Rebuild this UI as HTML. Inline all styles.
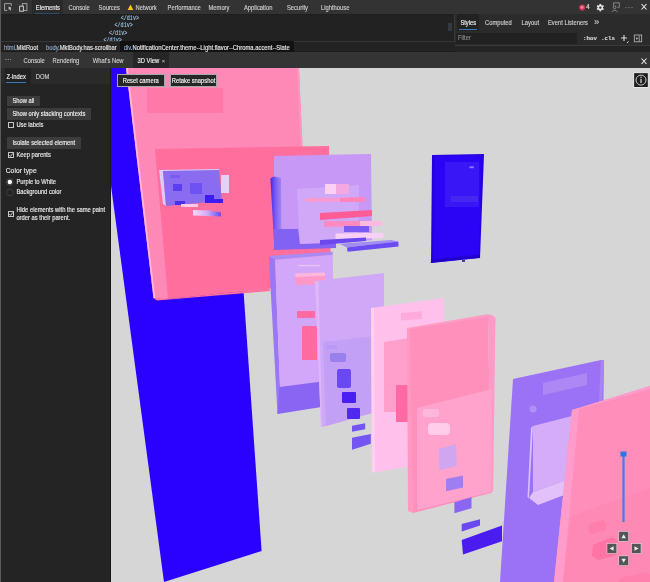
<!DOCTYPE html>
<html><head><meta charset="utf-8">
<style>
*{margin:0;padding:0;box-sizing:border-box}
html,body{width:650px;height:582px;overflow:hidden;background:#242424;font-family:"Liberation Sans",sans-serif;color:#ccc}
.a{position:absolute;white-space:nowrap}
#chromewrap div{-webkit-text-stroke:0.12px currentColor}
#top{position:absolute;left:0;top:0;width:650px;height:15.2px;background:#333;border-bottom:0.8px solid #1e1e1e}
#dom{position:absolute;left:0;top:15px;width:455px;height:26px;background:#222}
#crumb{position:absolute;left:0;top:40.6px;width:455px;height:11px;background:#232323;border-top:0.9px solid #363636;border-bottom:0.9px solid #1c1c1c}
#styles{position:absolute;left:455px;top:14px;width:195px;height:38px;background:#242424}
#drawer{position:absolute;left:0;top:51.6px;width:650px;height:16.4px;background:#343434}
#left{position:absolute;left:0;top:68px;width:110px;height:514px;background:#242424}
#canvas{position:absolute;left:111px;top:68px;width:539px;height:514px;background:#d6d6d6;overflow:hidden}
.t{font-size:5.8px;color:#cfcfcf;line-height:7px;transform:scaleY(1.15)}
.mono{font-family:"Liberation Mono",monospace}
.dm{font-size:5.1px;line-height:7px;color:#9cc0e0;transform:scaleY(1.25);transform-origin:0 0}
.cr{font-size:5.8px;line-height:7px;color:#e8e8e8;transform:scaleY(1.12)}
.tg{color:#8fa8c8}
.btn{position:absolute;background:#3c3c3c;color:#f0f0f0;font-size:5.8px;line-height:9.5px;padding-left:6px;white-space:nowrap}
.cb{position:absolute;width:6px;height:5.8px;border:0.8px solid #c8c8c8;border-radius:0.5px}
.btn span{display:inline-block;transform:scaleY(1.15)}
.cbtn span{display:inline-block;transform:scaleY(1.15);-webkit-text-stroke:0.12px currentColor}
.cbtn{will-change:transform;position:absolute;height:13.2px;background:#262626;border:0.7px solid #a8a8a8;color:#f6f6f6;font-size:5.8px;line-height:12.8px;text-align:center;white-space:nowrap}
</style></head><body>
<div id="chromewrap" style="position:absolute;left:0;top:0;width:650px;height:582px;will-change:transform">
<div id="top"></div>
<!-- top icons -->
<svg class="a" style="left:0;top:0" width="650" height="14" viewBox="0 0 650 14">
  <g fill="none" stroke="#a0a0a0" stroke-width="1">
    <path d="M11.3 5.8 V3.6 H4.6 V10.4 H7.2"/>
    <rect x="22.3" y="3.6" width="4.6" height="6.9"/>
  </g>
  <path d="M8.6 6.6 L11.8 8.1 L10.4 8.6 L11.2 10 L10.4 10.5 L9.6 9.1 L8.7 10 Z" fill="#c8c8c8"/>
  <rect x="19.6" y="6.2" width="3.8" height="5" fill="#333" stroke="#c8c8c8" stroke-width="1"/>
  <rect x="32" y="0" width="31" height="15" fill="#2a2a2a"/>
  <rect x="34.5" y="13.4" width="25" height="1" fill="#33689c"/>
  <path d="M127.6 10 L130.5 4.4 L133.4 10 Z" fill="#f5c518"/>
  <circle cx="582.2" cy="7.6" r="3.1" fill="#c8324e"/>
  <circle cx="582" cy="7.3" r="1.7" fill="#f07a92"/>
  <g transform="translate(600.3 7.6)"><circle r="2.7" fill="#e6e6e6"/>
    <g fill="#e6e6e6"><rect x="-0.9" y="-3.7" width="1.8" height="7.4"/><rect x="-0.9" y="-3.7" width="1.8" height="7.4" transform="rotate(60)"/><rect x="-0.9" y="-3.7" width="1.8" height="7.4" transform="rotate(-60)"/></g>
    <circle r="1.2" fill="#333"/></g>
  <g fill="none" stroke="#9a9a9a" stroke-width="0.8"><path d="M613.5 5.5 V2.8 H619.3 V7.3 H617.5"/><circle cx="614.6" cy="7.2" r="1.4"/><path d="M611.8 12 Q614.6 8.2 617.4 12"/></g>
  <g fill="#8a8a8a"><circle cx="626" cy="7.6" r="0.65"/><circle cx="629" cy="7.6" r="0.65"/><circle cx="632" cy="7.6" r="0.65"/></g>
  <path d="M641.5 4 L646.5 9.5 M646.5 4 L641.5 9.5" stroke="#eee" stroke-width="1.1"/>
</svg>
<div class="a t" style="left:35.8px;top:5.2px;color:#f0f0f0">Elements</div>
<div class="a t" style="left:68.5px;top:5.2px">Console</div>
<div class="a t" style="left:98.6px;top:5.2px">Sources</div>
<div class="a t" style="left:135.5px;top:5.2px">Network</div>
<div class="a t" style="left:167.6px;top:5.2px">Performance</div>
<div class="a t" style="left:208.5px;top:5.2px">Memory</div>
<div class="a t" style="left:244px;top:5.2px">Application</div>
<div class="a t" style="left:287px;top:5.2px">Security</div>
<div class="a t" style="left:321px;top:5.2px">Lighthouse</div>
<div class="a t" style="left:586.3px;top:4px;color:#eee">4</div>

<div id="dom"></div>
<div class="a mono dm" style="left:120.7px;top:15.3px">&lt;/div&gt;</div>
<div class="a mono dm" style="left:114.5px;top:22.2px">&lt;/div&gt;</div>
<div class="a mono dm" style="left:109px;top:29.9px">&lt;/div&gt;</div>
<div class="a mono dm" style="left:103.5px;top:37.2px">&lt;/div&gt;</div>
<div class="a" style="left:448px;top:23px;width:3.5px;height:8px;background:#343a42"></div>
<div class="a" style="left:454px;top:14px;width:1px;height:38px;background:#3a3a3a"></div>

<div id="crumb"></div>
<div class="a" style="left:120px;top:41px;width:174px;height:11px;background:#121212"></div>
<div class="a cr" style="left:4px;top:44.6px"><span class="tg">html</span>.MktRoot</div>
<div class="a cr" style="left:46px;top:44.6px"><span class="tg">body</span>.MktBody.has-scrollbar</div>
<div class="a cr" style="left:123.8px;top:44.6px;font-size:5.85px"><span class="tg">div</span>.NotificationCenter.theme--Light.flavor--Chroma.accent--Slate</div>

<div id="styles"></div>
<div class="a" style="left:455px;top:14px;width:195px;height:31px;background:#2b2b2b"></div>
<div class="a" style="left:457px;top:14px;width:22px;height:17px;background:#222"></div>
<div class="a" style="left:459px;top:29px;width:18px;height:1.2px;background:#3b78b8"></div>
<div class="a t" style="left:460.4px;top:19.8px;color:#f0f0f0">Styles</div>
<div class="a t" style="left:485px;top:19.8px">Computed</div>
<div class="a t" style="left:521.6px;top:19.8px">Layout</div>
<div class="a t" style="left:548px;top:19.8px">Event Listeners</div>
<div class="a" style="left:594px;top:17px;font-size:9.5px;line-height:9px;color:#ccc">»</div>
<div class="a" style="left:456px;top:33px;width:121px;height:11.4px;background:#212121"></div>
<div class="a t" style="left:458px;top:34.8px;color:#888">Filter</div>
<div class="a mono" style="left:583px;top:35px;font-size:5.8px;color:#ddd;font-weight:bold">:hov</div>
<div class="a mono" style="left:601px;top:35px;font-size:5.8px;color:#ddd;font-weight:bold">.cls</div>
<svg class="a" style="left:618px;top:32px" width="32" height="14">
  <path d="M3 6 H9 M6 3 V9" stroke="#ddd" stroke-width="1.1"/><path d="M9 11 L10.5 9.5" stroke="#ddd" stroke-width="1"/>
  <rect x="16.3" y="3" width="7.4" height="6.8" fill="none" stroke="#bbb" stroke-width="0.8"/><path d="M21.2 3.4 V9.6" stroke="#bbb" stroke-width="0.8"/><path d="M20.2 6.4 L18.3 5 V7.8 Z" fill="#ccc"/>
</svg>
<div class="a" style="left:455px;top:45px;width:195px;height:0.8px;background:#3a3a3a"></div>

<div id="drawer"></div>
<div class="a" style="left:133px;top:52px;width:36px;height:16px;background:#262626"></div>
<div class="a t" style="left:5px;top:57.3px;color:#aaa;letter-spacing:0.3px">···</div>
<div class="a t" style="left:23.5px;top:57.8px">Console</div>
<div class="a t" style="left:52.6px;top:57.8px">Rendering</div>
<div class="a t" style="left:92.8px;top:57.8px">What's New</div>
<div class="a t" style="left:137.6px;top:57.8px;color:#f0f0f0">3D View</div>
<div class="a t" style="left:162px;top:57.8px;font-size:5px;color:#aaa">×</div>
<svg class="a" style="left:636px;top:54px" width="14" height="14"><path d="M5.5 4.5 L10.5 10 M10.5 4.5 L5.5 10" stroke="#eee" stroke-width="1.1"/></svg>

<div id="left"></div>
<div class="a" style="left:0;top:68px;width:110px;height:16px;background:#2a2a2a"></div>
<div class="a" style="left:5px;top:68px;width:26px;height:16px;background:#222"></div>
<div class="a" style="left:6px;top:82px;width:20px;height:1.2px;background:#3b78b8"></div>
<div class="a t" style="left:6.5px;top:73.8px;color:#f0f0f0">Z-index</div>
<div class="a t" style="left:35.8px;top:73.8px">DOM</div>
<div class="btn" style="left:6.5px;top:96px;width:33px;height:9.5px;line-height:10.2px"><span>Show all</span></div>
<div class="btn" style="left:6.5px;top:108px;width:84px;height:11.5px;line-height:12.6px"><span>Show only stacking contexts</span></div>
<div class="cb" style="left:7.8px;top:122.3px"></div>
<div class="a t" style="left:16.4px;top:122px;color:#ececec">Use labels</div>
<div class="btn" style="left:6.5px;top:137px;width:74px;height:11.5px;line-height:12.2px"><span>Isolate selected element</span></div>
<div class="cb" style="left:7.8px;top:152px"></div>
<svg class="a" style="left:7.8px;top:152px" width="6" height="6"><path d="M1.3 3 L2.6 4.4 L4.8 1.4" fill="none" stroke="#ddd" stroke-width="0.9"/></svg>
<div class="a t" style="left:16.4px;top:152px;color:#ececec">Keep parents</div>
<div class="a" style="left:5.7px;top:167px;font-size:6.8px;color:#ececec;transform:scaleY(1.1)">Color type</div>
<svg class="a" style="left:5px;top:177px" width="10" height="22">
  <circle cx="4.8" cy="5" r="3.3" fill="none" stroke="#555" stroke-width="0.8"/><circle cx="4.8" cy="5" r="2.2" fill="#fff"/>
  <circle cx="4.8" cy="15.4" r="3.3" fill="none" stroke="#444" stroke-width="0.8"/>
</svg>
<div class="a t" style="left:16.4px;top:179px;color:#ececec">Purple to White</div>
<div class="a t" style="left:16.4px;top:189.4px;color:#ececec">Background color</div>
<div class="cb" style="left:7.8px;top:211px"></div>
<svg class="a" style="left:7.8px;top:211px" width="6" height="6"><path d="M1.3 3 L2.6 4.4 L4.8 1.4" fill="none" stroke="#ddd" stroke-width="0.9"/></svg>
<div class="a t" style="left:16.4px;top:207px;color:#ececec">Hide elements with the same paint</div>
<div class="a t" style="left:16.4px;top:215.3px;color:#ececec">order as their parent.</div>
<div class="a" style="left:0;top:0;width:1.2px;height:582px;background:#5a5a5a"></div>
<div class="a" style="left:110px;top:68px;width:1px;height:514px;background:#1a1a1a"></div>
</div>
<div id="canvas">
<svg width="539" height="514" viewBox="111 68 539 514" style="position:absolute;left:0;top:0">
  <!-- big blue -->
  <polygon points="111,68 228,68 261.6,551 164,582 111,185.7" fill="#2a00ff"/>
  <!-- outer pink -->
  <polygon points="126,68 299,68 305,200 300,285 157,300 153.5,298" fill="#ff89b6"/>
  <polygon points="126,68 127.8,68 155.3,298 153.5,298" fill="#ffb4d8"/>
  <rect x="147" y="88" width="76" height="25" fill="#ff78a8"/>
  <polygon points="297,68 299,68 302.5,148 300.5,148" fill="#ff95c0"/>
  <!-- dark pink -->
  <polygon points="155,149 329,146 331,282 168,299" fill="#ff6e9c"/><polygon points="153.5,298 168,299 269.6,288.3 270,291 157,300.5" fill="#ff6e9c"/>
  <!-- card in dark pink -->
  <polygon points="159,170 163,170 166,206 163,204" fill="#dccaf8"/>
  <polygon points="159,170 219,169 219,171 163,172" fill="#dccaf8"/>
  <polygon points="163,171 219,170 222,201 166,206" fill="#8a6cf0"/>
  <rect x="221" y="175" width="8" height="18" fill="#e2d2f8"/>
  <rect x="170" y="175" width="10" height="3" fill="#7a5cf0"/>
  <rect x="173" y="184" width="9" height="7" fill="#5a3ef0"/>
  <rect x="190" y="183" width="12" height="11" fill="#6f52f2"/>
  <rect x="205" y="195" width="9" height="8" fill="#3a1ef0"/>
  <rect x="213" y="199" width="10" height="4" fill="#3a1ef0"/>
  <rect x="175" y="201" width="10" height="4" fill="#4a2ef0"/>
  <rect x="181" y="204" width="17" height="3" fill="#ffc8e4"/>
  <defs><linearGradient id="gB" x1="0" y1="0" x2="1" y2="0"><stop offset="0" stop-color="#f8d8f8"/><stop offset="0.5" stop-color="#d0b0f6"/><stop offset="1" stop-color="#6a48f0"/></linearGradient></defs>
  <polygon points="193,210 210,210.5 221,212.5 221,216.5 193,215.5" fill="url(#gB)"/>
  <!-- purple panel A -->
  <polygon points="274,156 371,154 372,240 274,249" fill="#c898f6"/>
  <defs><linearGradient id="gA" x1="0" y1="0" x2="1" y2="0"><stop offset="0" stop-color="#4424f0"/><stop offset="0.45" stop-color="#7a5cf2"/><stop offset="1" stop-color="#a486f5"/></linearGradient></defs>
  <polygon points="270.4,178.5 273.8,176.5 281,178 281.5,249 274.5,249.6" fill="url(#gA)"/>
  <polygon points="274,229 298,229 300,244 336,243 336,248 274,250" fill="#8262f2"/>
  <polygon points="297,189 359,185 359,240 300,244" fill="#d0a8f8"/>
  <rect x="325" y="184" width="11" height="10" fill="#fcd0f4"/>
  <rect x="336" y="184" width="13" height="10" fill="#f5a8e0"/>
  <polygon points="305,198 365,197 365,202 305,202" fill="#f49ad4"/>
  <polygon points="340,198 365,197 365,202 340,202" fill="#ff84bc"/>
  <polygon points="320,213 372,210 372,216 320,220" fill="#ff5c96"/>
  <polygon points="324,221 382,221 382,226 324,227" fill="#ff8ac0"/>
  <polygon points="360,221 382,221 382,226 360,226" fill="#ffb8e0"/>
  <rect x="344" y="226" width="25" height="6" fill="#7a5af0"/>
  <polygon points="335.5,233.5 383.5,232.8 383.5,238 335.5,239" fill="#f8d0f6"/>
  <polygon points="320,240 366,237.4 366,241 320,245" fill="#6a48f0"/>
  <polygon points="339.2,243.8 391,240.1 398.3,241.4 347,247.5" fill="#a48cf5"/>
  <polygon points="347,247.5 398.3,241.4 398.6,246.6 347.5,251.8" fill="#6a4cf2"/>
  <!-- purple panel B -->
  <polygon points="268.8,256 332.8,251.7 332.8,254.8 275,259.7" fill="#a88cf5"/>
  <polygon points="268.8,256 275,259.7 281,412 277.5,414" fill="#9a78f5"/>
  <polygon points="275,259.7 332.8,254.8 334,405 281,412" fill="#d2a6f8"/>
  <polygon points="279.5,387 334,380 334,405 277.5,414" fill="#8a64f2"/>
  <rect x="298.3" y="264.8" width="21.5" height="1.6" fill="#e6c4f8"/>
  <polygon points="295.2,273.5 324.8,272.6 325,276 295.5,277" fill="#ffb8dc"/><polygon points="295.5,277 325,276 325,284 296,285" fill="#ff98c6"/>
  <rect x="297" y="311" width="18" height="7" fill="#ff6aa0"/>
  <rect x="302" y="326" width="15" height="34" fill="#ff6aa0"/>
  <!-- panel C -->
  <polygon points="315,281 384,273 384,409.8 321,427.3" fill="#d0a8f8"/>
  <polygon points="315,281 318.5,281 322,426.5 321,427.3" fill="#dcb8fa"/>
  <polygon points="323,342 384,335 384,409.8 326,426" fill="#c2a0f6"/>
  <rect x="327" y="345" width="10" height="4" fill="#b89af5"/>
  <rect x="330" y="353" width="16" height="9" rx="2" fill="#9a80ec"/>
  <rect x="337" y="369" width="14" height="19" rx="2" fill="#6a48f2"/>
  <rect x="342" y="392" width="14" height="11" rx="1" fill="#4a20f2"/>
  <rect x="347" y="408" width="13" height="11" rx="1" fill="#5028f2"/>
  <polygon points="352,425.7 365.2,423.3 365.2,429.3 352,431.7" fill="#7454f2"/>
  <polygon points="352,437.7 370.8,434 370.8,443.7 352,449.7" fill="#7454f2"/>
  <!-- panel D light pink -->
  <polygon points="371,308 444,298 445,460 372,473" fill="#ffc0ec"/>
  <polygon points="371,308 374,308 375,472 372,473" fill="#ffd0f0"/>
  <polygon points="401,313 422,311.2 422,319 401,320.4" fill="#ffaadc"/>
  <polygon points="384,342 410,338 410,412 384,412" fill="#ffa0cc"/>
  <rect x="396" y="385" width="14" height="37" fill="#ff6aa5"/>
  <!-- panel E pink -->
  <polygon points="407,328 487,314.2 492,315 495.4,317.7 495.4,325 410,329" fill="#ff9cc6"/>
  <polygon points="407,328 412,329 413,513 408,511" fill="#ff98c2"/>
  <polygon points="410,329 488,317 491,493 413,513" fill="#ff8fbb"/>
  <polygon points="488,317 495.4,317.7 493.2,491 491,493" fill="#ff9ac6"/>
  <polygon points="417,408 492,389 491,492 417,510" fill="#ffa2cc"/>
  <rect x="423" y="409" width="16" height="8" rx="2" fill="#ffb8dc"/>
  <rect x="428" y="423" width="22" height="12" rx="4" fill="#ffcce9"/>
  <polygon points="439,449 456,444 456.8,466 439.5,470" fill="#cfa6ef"/>
  <polygon points="446,479 463,475.4 463,487.6 446,491.2" fill="#a07ef2"/>
  <polygon points="454.4,502.2 471.5,497.3 471.5,508.3 454.4,513.2" fill="#8a66f2"/>
  <polygon points="461.7,524.1 480,519.3 480,525.4 461.7,531.5" fill="#6a48f2"/>
  <polygon points="461.7,540 502,525.4 502,541.2 463,554.6" fill="#4a1cf0"/>
  <!-- small blue panel -->
  <polygon points="432,155 484,154 480,258 431,263" fill="#2600e0"/>
  <polygon points="435,156 481,155 479,257 434,261" fill="#2c04f5"/>
  <rect x="445" y="162" width="34" height="45" fill="#3816f6"/>
  <rect x="451" y="196" width="27" height="6" fill="#4428f2"/>
  <rect x="469.5" y="166.3" width="4.3" height="1.9" fill="#8878ff"/>
  <polygon points="431,259.5 480,254.5 480,257.8 430.8,262.8" fill="#2200cc"/>
  <rect x="462" y="259.5" width="3" height="2.5" fill="#4a3cc0"/>
  <!-- panel F purple -->
  <polygon points="513,379 601,360 604,360 601,582 500,582" fill="#9b72f5"/>
  <polygon points="601,360 604,360 601,420 598,420" fill="#a884f6"/>
  <polygon points="543,383 587,373 587,385 543,395" fill="#ad88f5"/>
  <circle cx="533" cy="409" r="3.5" fill="#b090f5"/>
  <polygon points="531,428 533,426 529,498 527.5,497" fill="#dcc0f8"/>
  <polygon points="533,426 572,416 572,478 533,492" fill="#d4acf8"/>
  <polygon points="529,498 533,492 572,478 572,492 538,505" fill="#e2c0fa"/>
  <!-- panel G pink -->
  <polygon points="572,410 650,386 650,582 554,582" fill="#ff8fba"/>
  <polygon points="572,410 579,408 563,582 554,582" fill="#ff9ccc"/>
  <polygon points="572,410 650,386 650,389 579,409" fill="#ff9ccc"/>
  <polygon points="570.6,516 650,488 650,582 563,582" fill="#ff89b5"/>
  <polygon points="589,524 603,520 606,523 606,530 592,534 588,531" fill="#ff7eac"/>
  <polygon points="593,545 612,537 617,540 617,555 598,560 592,556" fill="#ff74a4"/><polygon points="620,578 645,572 650,574 650,582 618,582" fill="#ff80ad"/>

</svg>
</div>
<div class="cbtn" style="left:116.5px;top:73.8px;width:47.5px"><span>Reset camera</span></div>
<div class="cbtn" style="left:170px;top:73.8px;width:47px"><span>Retake snapshot</span></div>
<svg class="a" style="left:633px;top:72px" width="16" height="16">
  <rect x="0.7" y="0.7" width="14.6" height="14.8" fill="#1e1e1e" stroke="#f4f4f4" stroke-width="0.9"/>
  <circle cx="8" cy="8.1" r="5" fill="none" stroke="#ddd" stroke-width="0.9"/>
  <rect x="7.4" y="6.8" width="1.2" height="4.2" fill="#ddd"/><circle cx="8" cy="5.3" r="0.7" fill="#ddd"/>
</svg>
<svg class="a" style="left:600px;top:445px" width="50" height="125">
  <rect x="22.4" y="11" width="2.2" height="66" fill="#3a82e6"/>
  <rect x="20.5" y="6.5" width="6" height="5" fill="#2a78e0"/>
  <g stroke="#e8e8e8" stroke-width="0.5" fill="#555">
   <rect x="18.8" y="86.5" width="9.7" height="9.7"/><rect x="7" y="98.7" width="9.8" height="9.7"/>
   <rect x="31.5" y="98.7" width="9.5" height="9.7"/><rect x="18.8" y="110.9" width="9.7" height="9.7"/>
  </g>
  <g fill="#eee">
   <path d="M21.4 93.3 L23.65 89.3 L25.9 93.3Z"/><path d="M13.6 101.3 L9.6 103.55 L13.6 105.8Z"/>
   <path d="M34.5 101.3 L38.5 103.55 L34.5 105.8Z"/><path d="M21.4 113.8 L23.65 117.8 L25.9 113.8Z"/>
  </g>
</svg>

</body></html>
